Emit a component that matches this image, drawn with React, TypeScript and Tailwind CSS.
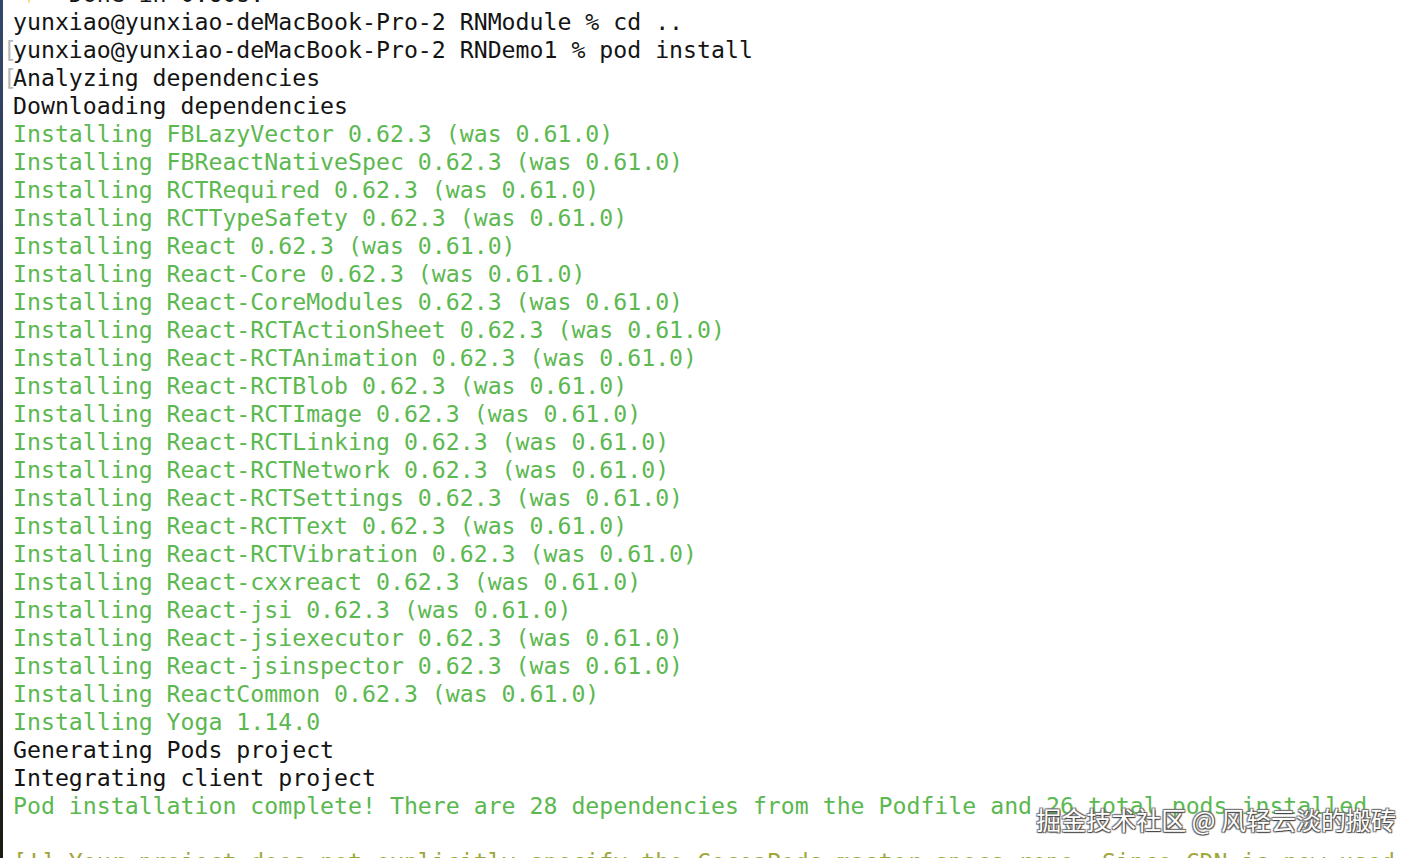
import React from "react";

type Line = { text: string; color: "black" | "green" | "yellow"; mark?: boolean; sparkle?: boolean };

const installs = [
  "FBLazyVector 0.62.3 (was 0.61.0)",
  "FBReactNativeSpec 0.62.3 (was 0.61.0)",
  "RCTRequired 0.62.3 (was 0.61.0)",
  "RCTTypeSafety 0.62.3 (was 0.61.0)",
  "React 0.62.3 (was 0.61.0)",
  "React-Core 0.62.3 (was 0.61.0)",
  "React-CoreModules 0.62.3 (was 0.61.0)",
  "React-RCTActionSheet 0.62.3 (was 0.61.0)",
  "React-RCTAnimation 0.62.3 (was 0.61.0)",
  "React-RCTBlob 0.62.3 (was 0.61.0)",
  "React-RCTImage 0.62.3 (was 0.61.0)",
  "React-RCTLinking 0.62.3 (was 0.61.0)",
  "React-RCTNetwork 0.62.3 (was 0.61.0)",
  "React-RCTSettings 0.62.3 (was 0.61.0)",
  "React-RCTText 0.62.3 (was 0.61.0)",
  "React-RCTVibration 0.62.3 (was 0.61.0)",
  "React-cxxreact 0.62.3 (was 0.61.0)",
  "React-jsi 0.62.3 (was 0.61.0)",
  "React-jsiexecutor 0.62.3 (was 0.61.0)",
  "React-jsinspector 0.62.3 (was 0.61.0)",
  "ReactCommon 0.62.3 (was 0.61.0)",
  "Yoga 1.14.0",
];

const lines: Line[] = [
  { text: "    Done in 0.60s.", color: "black", sparkle: true },
  { text: "yunxiao@yunxiao-deMacBook-Pro-2 RNModule % cd ..", color: "black" },
  { text: "yunxiao@yunxiao-deMacBook-Pro-2 RNDemo1 % pod install", color: "black", mark: true },
  { text: "Analyzing dependencies", color: "black", mark: true },
  { text: "Downloading dependencies", color: "black" },
  ...installs.map((s) => ({ text: "Installing " + s, color: "green" as const })),
  { text: "Generating Pods project", color: "black" },
  { text: "Integrating client project", color: "black" },
  {
    text: "Pod installation complete! There are 28 dependencies from the Podfile and 26 total pods installed.",
    color: "green",
  },
  { text: "", color: "black" },
  {
    text: "[!] Your project does not explicitly specify the CocoaPods master specs repo. Since CDN is now used",
    color: "yellow",
  },
];

const colorClass = {
  black: "text-[#141414]",
  green: "text-[#5cb850]",
  yellow: "text-[#9ea83a]",
};

function Sparkle() {
  return (
    <svg width="22" height="22" viewBox="0 0 24 24" className="absolute left-[5px] top-[4px]">
      <path d="M12 2 L13.8 10.2 L22 12 L13.8 13.8 L12 22 L10.2 13.8 L2 12 L10.2 10.2 Z" fill="#f0cf4a" />
      <path d="M20 1 L20.8 4.2 L24 5 L20.8 5.8 L20 9 L19.2 5.8 L16 5 L19.2 4.2 Z" fill="#f0cf4a" />
    </svg>
  );
}

export default function App() {
  return (
    <div className="relative w-[1420px] h-[858px] overflow-hidden bg-white flex">
      <div className="w-[3px] h-full shrink-0 bg-gradient-to-b from-[#34476b] via-[#2a3244] to-[#1b1b12]" />
      <div className="flex-1 pl-[10px] -mt-[20px] font-['DejaVu_Sans_Mono','Liberation_Mono',monospace] text-[23.2px] leading-[28px] whitespace-pre">
        {lines.map((l, i) => (
          <div key={i} className={`relative h-[28px] ${colorClass[l.color]}`}>
            {l.mark && (
              <span className="absolute -left-[10px] top-0 text-[#b8b8b8] font-['DejaVu_Sans_Mono',monospace]">[</span>
            )}
            {l.sparkle && <Sparkle />}
            {l.text}
          </div>
        ))}
      </div>
      <div className="absolute right-[24px] bottom-[24px] text-white text-[25px] leading-[30px] font-['Noto_Sans_CJK_SC',sans-serif] [text-shadow:1px_1px_1px_#444,-1px_-1px_1px_#777,1px_-1px_1px_#666,-1px_1px_1px_#666]">
        掘金技术社区 @ 风轻云淡的搬砖
      </div>
    </div>
  );
}
